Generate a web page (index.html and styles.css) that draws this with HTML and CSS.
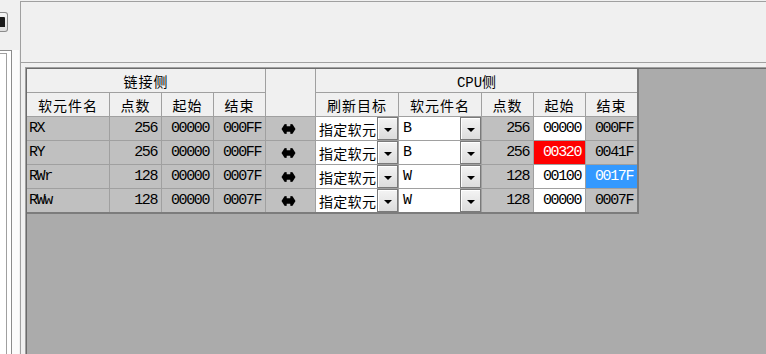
FILE: index.html
```html
<!DOCTYPE html>
<html lang="zh-CN">
<head>
<meta charset="utf-8">
<link rel="stylesheet" href="styles.css">
</head>
<body>
<div class="side">
  <div class="btn"><div class="btn-icon"></div></div>
  <div class="list">
    <div class="list-outer"><div class="list-inner"></div></div>
  </div>
</div>
<div class="main">
  <div class="toolbar"></div>
  <div class="content">
    <div class="gridctl">
      <div class="tbl">
        <div class="c h span-link">链接侧</div>
        <div class="c h arrow-head"></div>
        <div class="c h span-cpu">CPU侧</div>

        <div class="c h">软元件名</div>
        <div class="c h">点数</div>
        <div class="c h">起始</div>
        <div class="c h">结束</div>
        <div class="c h">刷新目标</div>
        <div class="c h">软元件名</div>
        <div class="c h">点数</div>
        <div class="c h">起始</div>
        <div class="c h">结束</div>

        <div class="c l">RX</div>
        <div class="c r">256</div>
        <div class="c r">00000</div>
        <div class="c r">000FF</div>
        <div class="c ar"><svg class="arrow" viewBox="0 0 14 10" width="15" height="10"><path d="M0 5 L3 0.3 L5 0 L5.3 2.2 L8.7 2.2 L9 0 L11 0.3 L14 5 L11 9.7 L9 10 L8.7 7.8 L5.3 7.8 L5 10 L3 9.7 Z" fill="#000"/></svg></div>
        <div class="c combo"><span class="ct">指定软元</span><span class="dd"><i></i></span></div>
        <div class="c combo"><span class="ct lat">B</span><span class="dd"><i></i></span></div>
        <div class="c r">256</div>
        <div class="c r w">00000</div>
        <div class="c r">000FF</div>

        <div class="c l">RY</div>
        <div class="c r">256</div>
        <div class="c r">00000</div>
        <div class="c r">000FF</div>
        <div class="c ar"><svg class="arrow" viewBox="0 0 14 10" width="15" height="10"><path d="M0 5 L3 0.3 L5 0 L5.3 2.2 L8.7 2.2 L9 0 L11 0.3 L14 5 L11 9.7 L9 10 L8.7 7.8 L5.3 7.8 L5 10 L3 9.7 Z" fill="#000"/></svg></div>
        <div class="c combo"><span class="ct">指定软元</span><span class="dd"><i></i></span></div>
        <div class="c combo"><span class="ct lat">B</span><span class="dd"><i></i></span></div>
        <div class="c r">256</div>
        <div class="c r red">00320</div>
        <div class="c r">0041F</div>

        <div class="c l">RWr</div>
        <div class="c r">128</div>
        <div class="c r">00000</div>
        <div class="c r">0007F</div>
        <div class="c ar"><svg class="arrow" viewBox="0 0 14 10" width="15" height="10"><path d="M0 5 L3 0.3 L5 0 L5.3 2.2 L8.7 2.2 L9 0 L11 0.3 L14 5 L11 9.7 L9 10 L8.7 7.8 L5.3 7.8 L5 10 L3 9.7 Z" fill="#000"/></svg></div>
        <div class="c combo"><span class="ct">指定软元</span><span class="dd"><i></i></span></div>
        <div class="c combo"><span class="ct lat">W</span><span class="dd"><i></i></span></div>
        <div class="c r">128</div>
        <div class="c r w">00100</div>
        <div class="c r blue">0017F</div>

        <div class="c l">RWw</div>
        <div class="c r">128</div>
        <div class="c r">00000</div>
        <div class="c r">0007F</div>
        <div class="c ar"><svg class="arrow" viewBox="0 0 14 10" width="15" height="10"><path d="M0 5 L3 0.3 L5 0 L5.3 2.2 L8.7 2.2 L9 0 L11 0.3 L14 5 L11 9.7 L9 10 L8.7 7.8 L5.3 7.8 L5 10 L3 9.7 Z" fill="#000"/></svg></div>
        <div class="c combo"><span class="ct">指定软元</span><span class="dd"><i></i></span></div>
        <div class="c combo"><span class="ct lat">W</span><span class="dd"><i></i></span></div>
        <div class="c r">128</div>
        <div class="c r w">00000</div>
        <div class="c r">0007F</div>
      </div>
    </div>
  </div>
</div>
</body>
</html>
```
FILE: styles.css
```css
html, body {
  margin: 0;
  padding: 0;
}
body {
  width: 766px;
  height: 354px;
  overflow: hidden;
  background: #f0f0f0;
  display: flex;
  font-family: "Liberation Mono", "Noto Sans CJK SC", monospace;
  color: #000;
}
.side {
  width: 20px;
  flex: none;
  display: flex;
  flex-direction: column;
  padding-top: 12px;
  box-sizing: border-box;
}
.btn {
  width: 8px;
  height: 20px;
  box-sizing: border-box;
  border: 1px solid #8c8c8c;
  border-left: none;
  border-radius: 0 3px 3px 0;
  background: linear-gradient(#f6f6f6, #dedede);
  display: flex;
  align-items: center;
}
.btn-icon {
  width: 5px;
  height: 10px;
  background: #1a1a1a;
  border-radius: 0 1px 0 0;
}
.list {
  margin-top: 18px;
  flex: 1;
  width: 19px;
  background: #fbfbfb;
  display: flex;
}
.list-outer {
  width: 12px;
  box-sizing: border-box;
  border-top: 1px solid #8c8c8c;
  border-right: 1px solid #8c8c8c;
  padding-top: 2px;
  padding-right: 4px;
  background: #ffffff;
  display: flex;
}
.list-inner {
  flex: 1;
  border-top: 1px solid #a0a0a0;
  border-right: 1px solid #a0a0a0;
  background: #fff;
}
.main {
  flex: 1;
  margin-top: 1px;
  border-top: 1px solid #a0a0a0;
  border-left: 1px solid #a0a0a0;
  display: flex;
  flex-direction: column;
}
.toolbar {
  height: 60px;
  flex: none;
  border-bottom: 1px solid #a0a0a0;
}
.content {
  flex: 1;
  padding: 4px 0 0 4px;
  display: flex;
}
.gridctl {
  flex: 1;
  border-top: 1px solid #a0a0a0;
  border-left: 1px solid #a0a0a0;
  box-shadow: inset 1px 1px 0 #6b6b6b;
  padding: 1px 0 0 1px;
  background: #ababab;
  display: flex;
  flex-direction: column;
}
.tbl {
  align-self: flex-start;
  display: grid;
  grid-template-columns: 82px 51px 51px 51px 49px 82px 82px 51px 51px 51px;
  grid-auto-rows: 23px;
  gap: 1px;
  background: #a0a0a0;
  border-right: 2px solid #7c7c7c;
  border-bottom: 2px solid #7c7c7c;
}
.c {
  display: flex;
  align-items: center;
  background: #c0c0c0;
  color: #000;
  font-size: 15px;
  letter-spacing: -1.4px;
  white-space: nowrap;
  overflow: hidden;
  min-width: 0;
}
.h {
  background: #f0f0f0;
  justify-content: center;
  font-family: "Noto Sans CJK SC", sans-serif;
  font-size: 14px;
  letter-spacing: 1px;
  color: #000;
}
.span-link {
  grid-column: 1 / 5;
}
.arrow-head {
  grid-column: 5;
  grid-row: 1 / 3;
}
.span-cpu {
  grid-column: 6 / 11;
  font-family: "Liberation Mono", "Noto Sans CJK SC", monospace;
  letter-spacing: 0;
}
.l {
  padding-left: 2px;
}
.r {
  justify-content: flex-end;
  padding-right: 4px;
}
.w {
  background: #ffffff;
}
.red {
  background: #ff0000;
  color: #ffffff;
}
.blue {
  background: #3399ff;
  color: #ffffff;
}
.ar {
  justify-content: center;
  padding-right: 4px;
}
.arrow {
  display: block;
}
.combo {
  background: #ffffff;
  align-items: stretch;
}
.ct {
  flex: 1;
  min-width: 0;
  padding-left: 3px;
  display: flex;
  align-items: center;
  font-family: "Noto Sans CJK SC", sans-serif;
  font-size: 14px;
  letter-spacing: 0.3px;
}
.ct.lat {
  font-family: "Liberation Mono", monospace;
  font-size: 15px;
  letter-spacing: 0;
  padding-left: 4px;
}
.dd {
  flex: none;
  width: 21px;
  box-sizing: border-box;
  border: 1px solid #7a7a7a;
  background: linear-gradient(#f4f4f4, #dcdcdc);
  box-shadow: inset 1px 1px 0 #ffffff;
  display: flex;
  align-items: center;
  justify-content: center;
}
.dd i {
  width: 0;
  height: 0;
  border-left: 4px solid transparent;
  border-right: 4px solid transparent;
  border-top: 4px solid #000;
  margin-top: 2px;
}
```
